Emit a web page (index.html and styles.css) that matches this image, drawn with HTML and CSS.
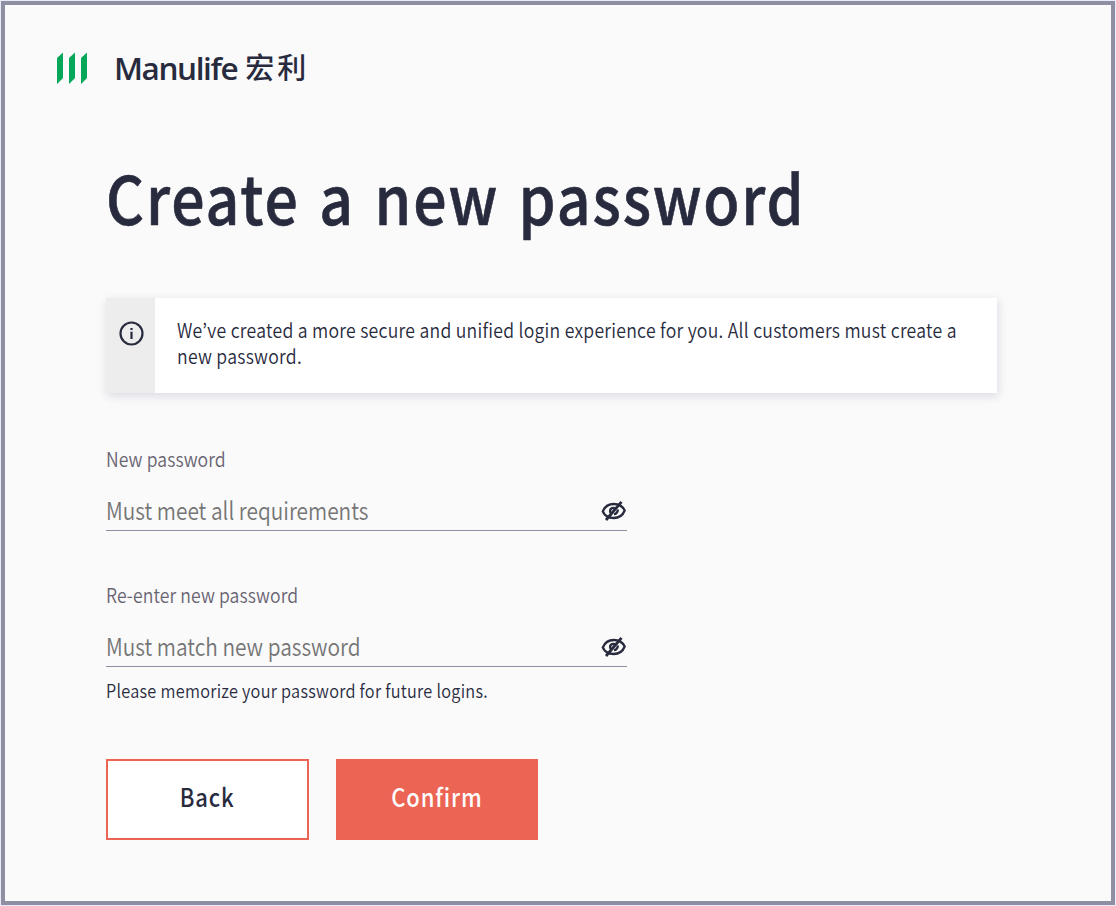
FILE: index.html
```
<!DOCTYPE html>
<html lang="en">
<head>
    <meta charset="UTF-8">
    <title>Create a new password</title>
    <link rel="stylesheet" href="styles.css">
</head>

<body>
    <div class="page">
        <header class="brand">
            <svg class="brand-mark" width="32" height="32" viewBox="0 0 32 32">
                <path d="M1 6 7 0.5V26L1 32ZM13 6 19 0.5V26L13 32ZM25 6 31 0.5V26L25 32Z" fill="#06a758" />
            </svg>
            <span class="brand-name">Manulife</span>
            <span class="brand-name-zh" lang="zh-Hant">宏利</span>
        </header>

        <main class="content">
            <h1><span class="fit">Create a new password</span></h1>

            <div class="notice">
                <div class="notice-icon">
                    <svg width="26" height="26" viewBox="0 0 26 26">
                        <circle cx="13.5" cy="13.5" r="11" fill="none" stroke="#282b3e" stroke-width="2.2" />
                        <path d="M12.4 7.9h2.2v2.2h-2.2zM12.4 11.8h2.2v7.3h-2.2z" fill="#282b3e" />
                    </svg>
                </div>
                <p class="notice-text">
                    <span class="fit">We’ve created a more secure and unified login experience for you. All customers must create a</span><br>
                    <span class="fit">new password.</span>
                </p>
            </div>

            <form>
                <div class="field">
                    <label for="newPassword"><span class="fit">New password</span></label>
                    <div class="input-row">
                        <input type="password" id="newPassword" placeholder="Must meet all requirements">
                        <svg class="eye" width="26" height="22" viewBox="0 0 26 22">
                            <path d="M1.8 11.5C3.8 6.5 8 4 12.7 4S21.5 6 23.7 10.5C21.7 15.5 17.5 18 12.700 18S3.800 16 1.800 11.500Z" />
                            <path d="M9.500 13C8 8.500 11.500 7 14.500 8.500M17 9.500C16.500 12.500 15 14 13 14.200" />
                            <path class="slash" d="M5 20 20.500 1.800" />
                        </svg>
                    </div>
                </div>

                <div class="field">
                    <label for="confirmPassword"><span class="fit">Re-enter new password</span></label>
                    <div class="input-row">
                        <input type="password" id="confirmPassword" placeholder="Must match new password">
                        <svg class="eye" width="26" height="22" viewBox="0 0 26 22">
                            <path d="M1.800 11.500C3.800 6.500 8 4 12.700 4S21.500 6 23.700 10.500C21.700 15.500 17.500 18 12.700 18S3.800 16 1.800 11.500Z" />
                            <path d="M9.500 13C8 8.500 11.500 7 14.500 8.500M17 9.500C16.500 12.500 15 14 13 14.200" />
                            <path class="slash" d="M5 20 20.500 1.800" />
                        </svg>
                    </div>
                    <p class="hint"><span class="fit">Please memorize your password for future logins.</span></p>
                </div>

                <div class="actions">
                    <button type="button" class="btn btn-back"><span class="fit">Back</span></button>
                    <button type="submit" class="btn btn-confirm"><span class="fit">Confirm</span></button>
                </div>
            </form>
        </main>
    </div>
</body>
</html>
```
FILE: styles.css
```
* {
    box-sizing: border-box;
}

body {
    margin: 0;
    padding: 1px;
    height: 906px;
    background-color: #e9ebf8;
    color: #282b3e;
    font-family: "Noto Sans CJK KR", "Noto Sans", sans-serif;
    overflow: hidden;
}

.page {
    height: 904px;
    border: 4px solid #8e8fa3;
    background-color: #fafafa;
}

.brand {
    display: flex;
    align-items: center;
    height: 48px;
    margin: 39px 0 0 51px;
}

.brand-name {
    margin-left: 26px;
    font: 600 31.5px/48px "Open Sans", sans-serif;
    letter-spacing: -1.4px;
}

.brand-name-zh {
    margin-left: 8px;
    font-family: "Noto Sans CJK TC", sans-serif;
    font-size: 29px;
    font-weight: 500;
    letter-spacing: 3px;
    line-height: 46px;
    padding-bottom: 4px;
}

.content {
    margin: 54px 0 0 101px;
}

/* narrow the letterforms horizontally */
.fit {
    display: inline-block;
    white-space: nowrap;
    transform: scaleX(0.88);
    transform-origin: left;
}

h1 {
    margin: 0;
    font-size: 67px;
    font-weight: 500;
    letter-spacing: 2.1px;
    word-spacing: 5px;
    line-height: 100px;
    -webkit-text-stroke: 0.6px #282b3e;
}

.notice {
    display: flex;
    width: 891px;
    height: 95px;
    margin-top: 52px;
    background-color: #fff;
    box-shadow: 1px 3px 9px rgba(40, 43, 110, 0.15);
}

.notice-icon {
    flex: none;
    width: 49px;
    padding: 22px 0 0 12px;
    background-color: #ededee;
}

.notice-text {
    width: 800px;
    margin: 0;
    padding: 19px 0 0 22px;
    font-size: 20px;
    font-weight: 350;
    letter-spacing: 0.3px;
    line-height: 26px;
}

.field {
    width: 521px;
    height: 136px;
}

form {
    padding-top: 52px;
}

label {
    display: block;
    height: 28px;
    color: #696473;
    font-size: 20px;
    font-weight: 350;
    letter-spacing: 0.1px;
    line-height: 28px;
}

.input-row {
    display: flex;
    align-items: center;
    justify-content: space-between;
    height: 58px;
    padding-top: 18px;
    border-bottom: 1px solid #8e8fa3;
}

input {
    width: 480px;
    height: 36px;
    margin-bottom: 1px;
    padding: 0;
    border: 0;
    outline: 0;
    background: none;
    color: #282b3e;
    font: 350 24.5px/36px "Noto Sans CJK KR", sans-serif;
    transform: scaleX(0.85);
    transform-origin: left;
}

input::placeholder {
    color: #757575;
    opacity: 1;
}

.eye {
    fill: none;
    stroke: #282b3e;
    stroke-width: 2.3;
}

.eye .slash {
    stroke-width: 2.8;
}

.hint {
    margin: 10px 0 0;
    font-size: 18.5px;
    font-weight: 350;
    letter-spacing: 0.3px;
    line-height: 26px;
}

.actions {
    display: flex;
    gap: 27px;
    margin-top: 42px;
}

.btn {
    width: 203px;
    height: 81px;
    padding: 0 0 7px;
    border: 2px solid #ec6453;
    font: 500 25px/36px "Noto Sans CJK KR", sans-serif;
    letter-spacing: 1px;
}

.btn .fit {
    transform-origin: center;
}

.btn-back {
    background-color: #fff;
    color: #282b3e;
}

.btn-confirm {
    width: 202px;
    background-color: #ec6453;
    color: #fff;
}
```
